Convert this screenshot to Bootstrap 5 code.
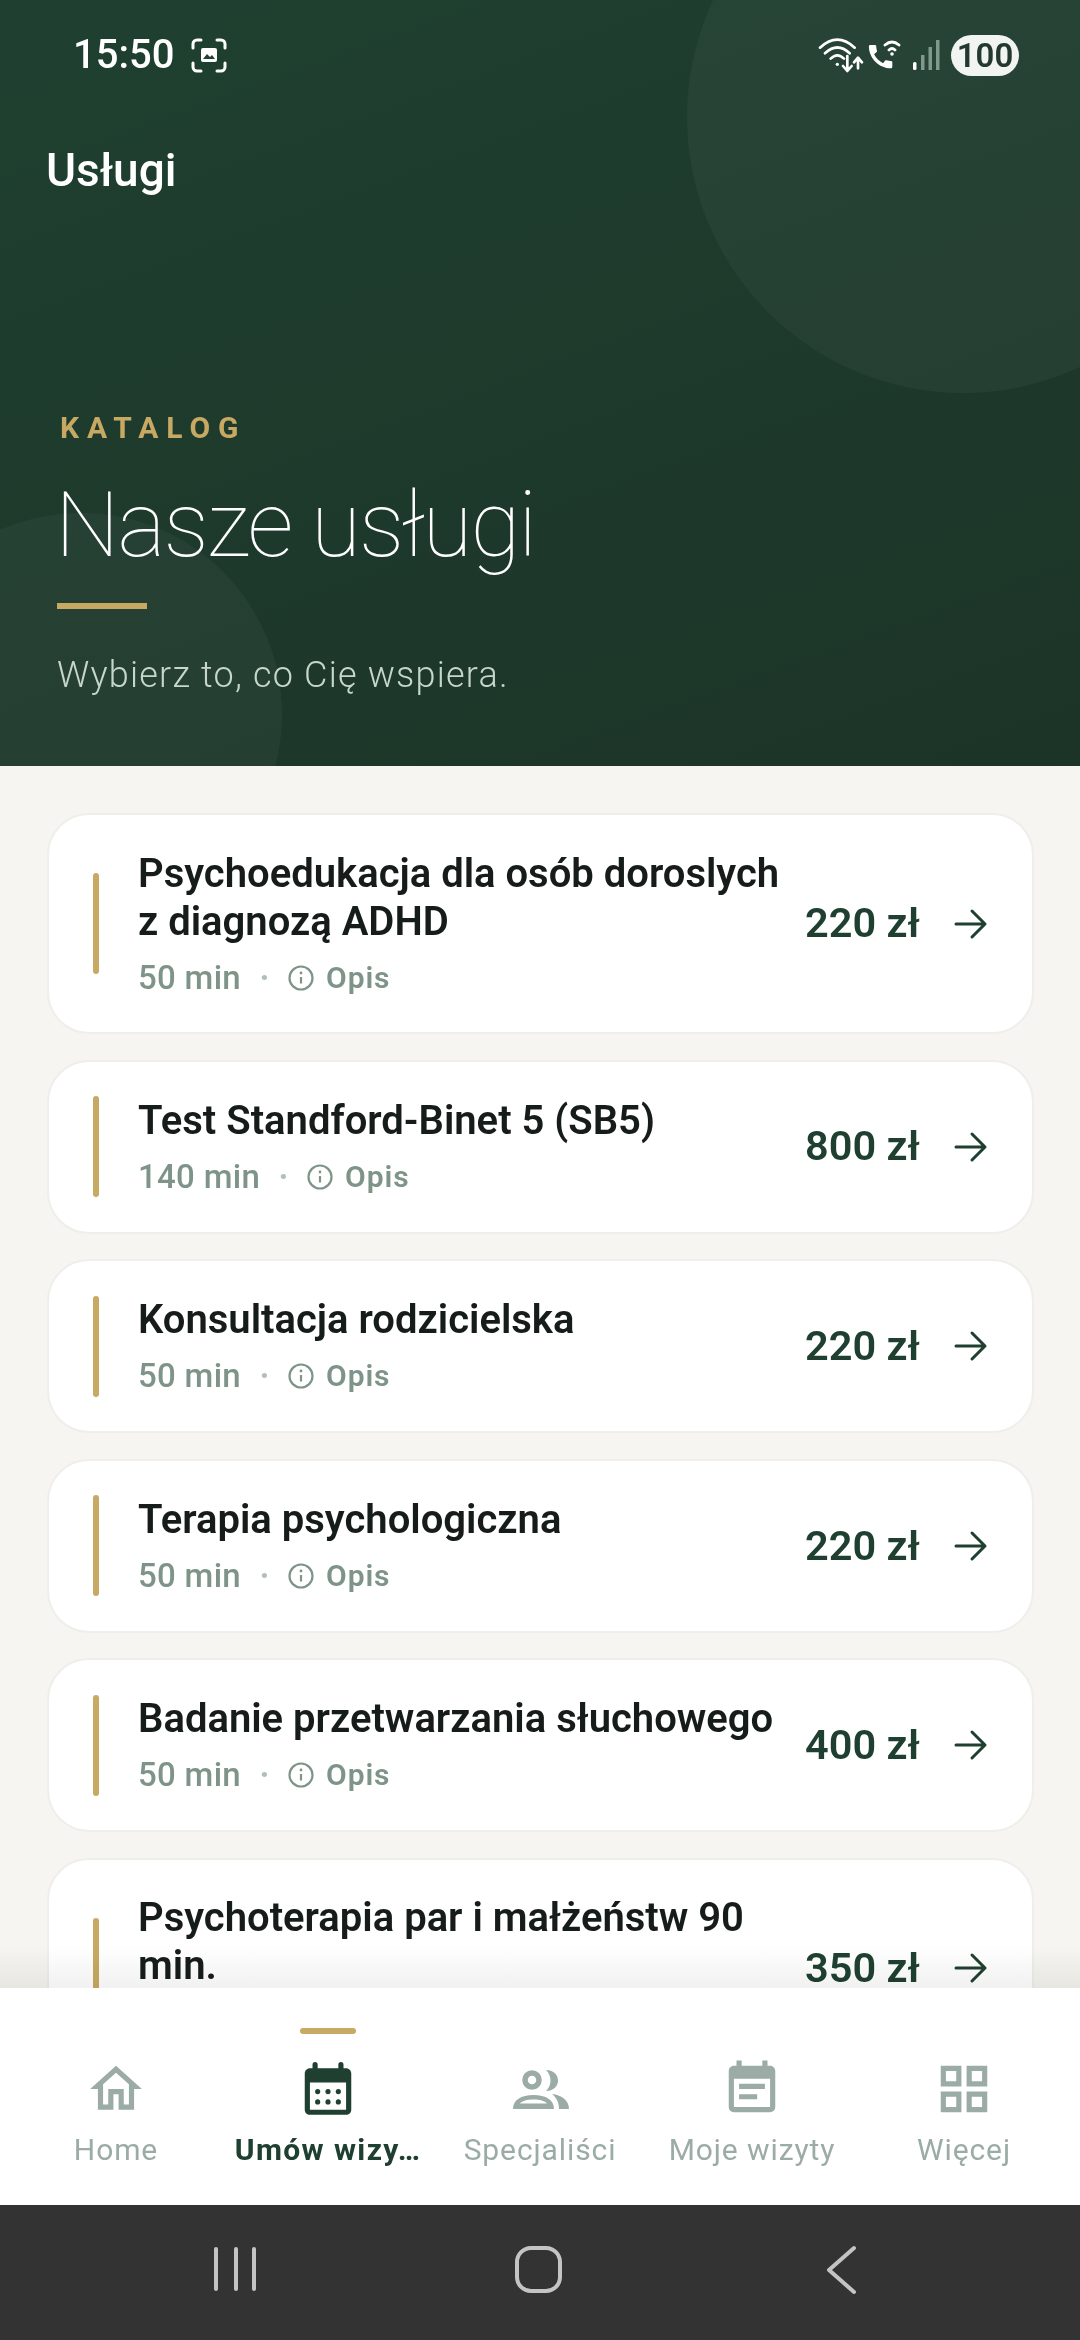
<!DOCTYPE html>
<html lang="pl">
<head>
  <meta charset="UTF-8">
  <title>Usługi</title>
  <link href="https://cdn.jsdelivr.net/npm/bootstrap@5.3.2/dist/css/bootstrap.min.css" rel="stylesheet">
  <style>
    html, body { margin: 0; height: 2340px; overflow: hidden; }
    body { font-family: Roboto, "Liberation Sans", sans-serif; background: #f6f5f1; }
    .app-screen { width: 1080px; height: 2340px; }

    /* header */
    .hero { height: 766px; background: linear-gradient(160deg, #1f4030 0%, #1c3427 100%); color: #fff; overflow: hidden; flex: none; }
    .blob { position: absolute; border-radius: 50%; background: rgba(255,255,255,.04); }
    .blob-top { left: 687px; top: -159px; width: 552px; height: 552px; }
    .blob-bottom { left: -120px; top: 513px; width: 402px; height: 402px; }
    .status-row { height: 110px; padding: 30px 0 0 73px; }
    .status-time { font-size: 40px; font-weight: 500; line-height: 50px; color: #fff; width: 118px; }
    .shot-mark { margin-top: 8px; }
    .status-right { margin-left: auto; margin-right: 61px; height: 50px; }
    .st-wifi { margin-right: 4px; }
    .st-call { margin-right: 11px; }
    .st-signal { margin-right: 11px; }
    .batt { background: #f2f4f2; color: #24392e; border-radius: 21px; font-size: 33px; font-weight: 600; width: 68px; height: 41px; line-height: 41px; text-align: center; }
    .hero-nav { font-size: 46px; font-weight: 500; line-height: 56px; padding: 32px 0 0 46px; height: 118px; }
    .hero-body { padding: 182px 0 0 57px; position: relative; }
    .eyebrow { font-size: 30px; font-weight: 700; color: #c8a964; letter-spacing: 7.9px; line-height: 36px; padding-left: 3px; }
    .hero-title { font-size: 91px; font-weight: 275; line-height: 108px; margin: 25px 0 0 -2px; letter-spacing: -2px; }
    .hero-rule { width: 90px; height: 6px; background: #c8a964; margin: 24px 0 0; }
    .hero-sub { font-size: 36px; font-weight: 300; color: #c6d6cd; letter-spacing: 1.2px; line-height: 44px; margin: 44px 0 0; }

    /* list */
    .svc-list { padding: 47px 46px 0 47px; gap: 25.6px; overflow: hidden; flex: 1 1 0; min-height: 0; }
    .svc-card { flex: none; flex-direction: row; align-items: center; background: #fff; border: 2px solid #efeeea; border-radius: 42px; padding: 34.5px 44px; }
    .svc-accent { width: 6px; border-radius: 3px; background: #c8a964; height: 101px; flex: none; margin-right: 39px; }
    .svc-name { font-size: 40px; font-weight: 650; color: #161c19; line-height: 48px; }
    .svc-meta { font-size: 33px; font-weight: 500; color: #7f9489; line-height: 40px; margin-top: 12px; letter-spacing: .3px; }
    .svc-sep { width: 47px; text-align: center; color: #b3bfb9; font-weight: 700; }
    .svc-opis { font-weight: 600; font-size: 30px; letter-spacing: .9px; margin-left: 12px; }
    .svc-price { font-size: 41.5px; font-weight: 600; color: #1f4030; width: 149px; flex: none; }
    .svc-arrow { flex: none; width: 34px; height: 34px; }
    .svc-body { width: 648px; flex: none; margin-right: 19px; }
    .list-wrap { flex: 1 1 0; min-height: 0; }
    /* greys the whites only, text stays dark */
    .fade-edge { left: 0; right: 0; bottom: 0; height: 42px; background: linear-gradient(to bottom, #fff, #f0f1f0); mix-blend-mode: multiply; }

    /* bottom tabs */
    .tabbar { height: 217px; background: #fff; padding: 0 10px; flex: none; }
    .tab-item { width: 212px; padding-top: 40px; color: #9baba5; }
    .tab-mark { height: 6px; width: 56px; border-radius: 3px; margin-bottom: 24px; }
    .tab-item.on .tab-mark { background: #c8a964; }
    .tab-item.on { color: #1f4030; font-weight: 700; }
    .tab-item.on .tab-text { letter-spacing: 1.4px; }
    .tab-icon { width: 62px; height: 62px; }
    .tab-text { font-size: 30px; line-height: 40px; margin-top: 10px; white-space: nowrap; letter-spacing: .9px; }

    /* system nav */
    .sysbar { height: 135px; background: #333; flex: none; }
    .sysbar svg { position: absolute; left: 0; top: 0; }
  </style>
</head>
<body>
<div class="app-screen d-flex flex-column">

  <header class="hero position-relative">
    <div class="blob blob-top"></div>
    <div class="blob blob-bottom"></div>

    <div class="status-row d-flex position-relative">
      <div class="status-time">15:50</div>
      <!-- screenshot marker -->
      <svg class="shot-mark" width="36" height="35" viewBox="0 0 36 35" fill="none" stroke="#fff" stroke-width="3" stroke-linecap="round">
        <path d="M2 10V6a4 4 0 0 1 4-4h4M26 2h4a4 4 0 0 1 4 4v4M34 25v4a4 4 0 0 1-4 4h-4M10 33H6a4 4 0 0 1-4-4v-4"/>
        <rect x="10" y="10" width="16" height="14" rx="2" fill="#fff" stroke="none"/>
        <path d="M12 21l4-5 3 3 2-2 3 4z" fill="#1f4331" stroke="none"/>
      </svg>
      <div class="status-right d-flex align-items-center">
        <svg class="st-wifi" width="46" height="36" viewBox="112 48 138 108" fill="none" stroke="#fff" stroke-width="8" stroke-linecap="round" stroke-linejoin="round">
          <path d="M118 80Q170 32 222 80M133 97Q170 62 207 97M150 113Q170 93 190 113"/>
          <circle cx="170" cy="130" r="5" fill="#fff" stroke="none"/>
          <path d="M200 105V148M187 135L200 150L213 135M232 142V112M220 124L232 110L244 124"/>
        </svg>
        <svg class="st-call" width="34" height="30" viewBox="0 0 34 30" fill="none">
          <path d="M20.010 15.380c-1.230 0-2.420-.2-3.530-.56a.977.977 0 0 0-1.010.24l-1.570 1.970c-2.830-1.350-5.480-3.900-6.890-6.830l1.950-1.660c.27-.28.35-.67.24-1.020-.37-1.110-.56-2.300-.56-3.530 0-.54-.45-.99-.99-.99H4.190C3.650 3 3 3.240 3 3.990 3 13.280 10.730 21 20.010 21c.71 0 .99-.63.99-1.180v-3.450c0-.54-.45-.99-.99-.99z" fill="#fff" transform="translate(-3 1) scale(1.300)"/>
          <path d="M17 5Q24-1 31 5M21 10Q24 7 27 10" stroke="#fff" stroke-width="2.800" stroke-linecap="round"/>
          <circle cx="24" cy="14" r="1.800" fill="#fff"/>
        </svg>
        <svg class="st-signal" width="27" height="30" viewBox="0 0 27 30">
          <rect x="0" y="22" width="3.500" height="8" rx="1.500" fill="#fff"/>
          <rect x="8" y="15" width="3.500" height="15" fill="#7f9a8c"/>
          <rect x="15.500" y="7" width="3.500" height="23" fill="#7f9a8c"/>
          <rect x="23" y="0" width="3.500" height="30" fill="#7f9a8c"/>
        </svg>
        <div class="batt">100</div>
      </div>
    </div>

    <div class="hero-nav position-relative">Usługi</div>

    <div class="hero-body">
      <div class="eyebrow">KATALOG</div>
      <h1 class="hero-title">Nasze usługi</h1>
      <div class="hero-rule"></div>
      <p class="hero-sub">Wybierz to, co Cię wspiera.</p>
    </div>
  </header>

  <div class="list-wrap position-relative d-flex flex-column">
    <div class="svc-list d-flex flex-column" id="svcList"></div>
    <div class="fade-edge position-absolute"></div>
  </div>

  <nav class="tabbar d-flex">
    <div class="tab-item d-flex flex-column align-items-center">
      <div class="tab-mark"></div>
      <svg class="tab-icon" viewBox="0 0 24 24" fill="currentColor"><path d="M12 5.69l5 4.5V18h-2v-6H9v6H7v-7.810l5-4.500M12 3L2 12h3v8h6v-6h2v6h6v-8h3L12 3z"/></svg>
      <div class="tab-text">Home</div>
    </div>
    <div class="tab-item on d-flex flex-column align-items-center">
      <div class="tab-mark"></div>
      <svg class="tab-icon" viewBox="0 0 24 24" fill="currentColor">
        <path d="M19 4h-1V2.500a1 1 0 0 0-2 0V4H8V2.500a1 1 0 0 0-2 0V4H5C3.900 4 3 4.900 3 6v14c0 1.100.9 2 2 2h14c1.100 0 2-.9 2-2V6c0-1.100-.9-2-2-2zm0 16H5V9.500h14V20z"/>
        <circle cx="8" cy="13" r="1"/><circle cx="12" cy="13" r="1"/><circle cx="16" cy="13" r="1"/>
        <circle cx="8" cy="17" r="1"/><circle cx="12" cy="17" r="1"/><circle cx="16" cy="17" r="1"/>
      </svg>
      <div class="tab-text">Umów wizy…</div>
    </div>
    <div class="tab-item d-flex flex-column align-items-center">
      <div class="tab-mark"></div>
      <svg class="tab-icon" viewBox="509 2057 62 62" fill="currentColor">
        <circle cx="532" cy="2079" r="7" fill="none" stroke="currentColor" stroke-width="5.500"/>
        <path fill-rule="evenodd" d="M513 2108c0-9 8-14 20.500-14s20.500 5 20.500 14zM520 2102.500c2-2.500 7-4 13.500-4s11.500 1.500 13.500 4z"/>
        <path d="M546 2069c7 0 12 4.500 12 10.500s-5 10.500-12 10.500c3-3 4.500-6.500 4.500-10.500s-1.500-7.500-4.500-10.500z"/>
        <path d="M552 2093c9 1 17 6 17 15h-10c0-6-2-11-7-15z"/>
      </svg>
      <div class="tab-text">Specjaliści</div>
    </div>
    <div class="tab-item d-flex flex-column align-items-center">
      <div class="tab-mark"></div>
      <svg class="tab-icon" viewBox="0 0 24 24" fill="currentColor"><path d="M17 10H7v2h10v-2zm2-7h-1V1h-2v2H8V1H6v2H5c-1.110 0-2 .9-2 2v14c0 1.100.89 2 2 2h14c1.100 0 2-.9 2-2V5c0-1.100-.9-2-2-2zm0 16H5V8h14v11zm-5-5H7v2h7v-2z"/></svg>
      <div class="tab-text">Moje wizyty</div>
    </div>
    <div class="tab-item d-flex flex-column align-items-center">
      <div class="tab-mark"></div>
      <svg class="tab-icon" viewBox="0 0 24 24" fill="currentColor"><path d="M3 3v8h8V3H3zm6 6H5V5h4v4zm-6 4v8h8v-8H3zm6 6H5v-4h4v4zm4-16v8h8V3h-8zm6 6h-4V5h4v4zm-6 4v8h8v-8h-8zm6 6h-4v-4h4v4z"/></svg>
      <div class="tab-text">Więcej</div>
    </div>
  </nav>

  <div class="sysbar position-relative">
    <svg width="1080" height="135" viewBox="0 0 1080 135" fill="none" stroke="#c4c4c4" stroke-width="4" stroke-linecap="round" stroke-linejoin="round">
      <path d="M216 44v40M236 44v40M254 44v40"/>
      <rect x="517" y="43" width="43" height="43" rx="14"/>
      <path d="M854 43l-25 22 25 22"/>
    </svg>
  </div>
</div>

<script>
  const services = [
    { name: 'Psychoedukacja dla osób doroslych z diagnozą ADHD', min: 50, price: 220 },
    { name: 'Test Standford-Binet 5 (SB5)', min: 140, price: 800 },
    { name: 'Konsultacja rodzicielska', min: 50, price: 220 },
    { name: 'Terapia psychologiczna', min: 50, price: 220 },
    { name: 'Badanie przetwarzania słuchowego', min: 50, price: 400 },
    { name: 'Psychoterapia par i małżeństw 90 min.', min: 90, price: 350 }
  ];
  const infoIcon = '<svg width="26" height="26" viewBox="0 0 26 26" fill="none" stroke="currentColor" stroke-width="2.200"><circle cx="13" cy="13" r="11.500"/><path d="M13 12v6.500"/><circle cx="13" cy="8" r="1.400" fill="currentColor" stroke="none"/></svg>';
  const arrowIcon = '<svg class="svc-arrow" viewBox="0 0 34 34" fill="none" stroke="#1f4030" stroke-width="3" stroke-linecap="round" stroke-linejoin="round"><path d="M2 17h29M18 4l13 13-13 13"/></svg>';
  document.getElementById('svcList').innerHTML = services.map(s => `
    <div class="card svc-card">
      <div class="svc-accent"></div>
      <div class="svc-body">
        <div class="svc-name">${s.name}</div>
        <div class="svc-meta d-flex align-items-center">
          <span>${s.min} min</span><span class="svc-sep">·</span>${infoIcon}<span class="svc-opis">Opis</span>
        </div>
      </div>
      <div class="svc-price">${s.price} zł</div>
      ${arrowIcon}
    </div>`).join('');
</script>
<script src="https://cdn.jsdelivr.net/npm/bootstrap@5.3.2/dist/js/bootstrap.bundle.min.js"></script>
</body>
</html>
